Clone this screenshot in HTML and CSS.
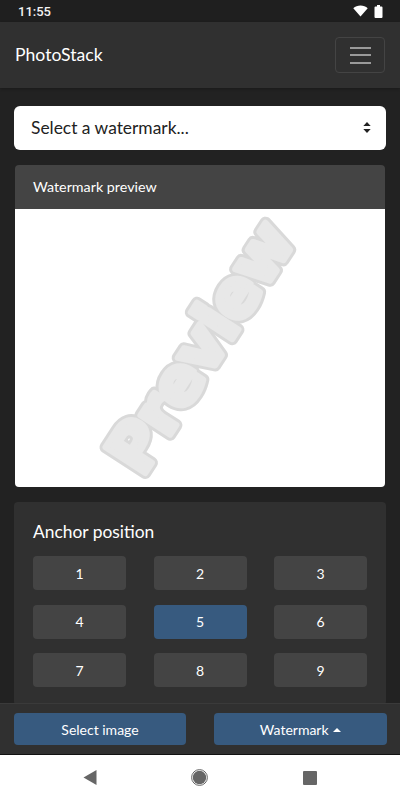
FILE: index.html
```html
<!DOCTYPE html>
<html lang="en">
<head>
    <meta charset="UTF-8">
    <meta name="viewport" content="width=device-width, initial-scale=1.0">
    <title>PhotoStack</title>
    <link rel="stylesheet" href="styles.css">
</head>
<body>
    <div class="status-bar">
        <span class="clock">11:55</span>
        <div class="status-icons">
            <svg width="15" height="12" viewBox="0 0 15 12"><path d="M7.5 11.5 0.3 3.2C2.2 1.500 4.700 0.500 7.500 0.500s5.300 1 7.200 2.700z" fill="#fff"/></svg>
            <svg width="9" height="13" viewBox="0 0 9 13"><path d="M3 0h3v1.500h1.500a1 1 0 0 1 1 1v9.500a1 1 0 0 1-1 1h-6a1 1 0 0 1-1-1v-9.500a1 1 0 0 1 1-1h1.500z" fill="#fff"/></svg>
        </div>
    </div>

    <nav class="navbar">
        <span class="brand">PhotoStack</span>
        <button class="toggler">
            <span></span><span></span><span></span>
        </button>
    </nav>

    <main class="content">
        <div class="select-box">
            <span>Select a watermark...</span>
            <svg width="8" height="11" viewBox="0 0 8 11"><path d="M4 0 7.700 4H.3zM4 11 .3 7h7.400z" fill="#222"/></svg>
        </div>

        <section class="preview-card">
            <div class="preview-head">Watermark preview</div>
            <div class="preview-body">
                <svg class="preview-mark" width="370" height="278" viewBox="0 0 370 278">
                    <defs>
                        <text id="markText" transform="translate(127 269) rotate(-57)">Preview</text>
                    </defs>
                    <use href="#markText" class="mark-edge"/>
                    <use href="#markText" class="mark-fill"/>
                </svg>
            </div>
        </section>

        <section class="anchor-card">
            <h2>Anchor position</h2>
            <div class="anchor-grid">
                <button class="anchor-btn">1</button>
                <button class="anchor-btn">2</button>
                <button class="anchor-btn">3</button>
                <button class="anchor-btn">4</button>
                <button class="anchor-btn active">5</button>
                <button class="anchor-btn">6</button>
                <button class="anchor-btn">7</button>
                <button class="anchor-btn">8</button>
                <button class="anchor-btn">9</button>
            </div>
        </section>
    </main>

    <div class="action-bar">
        <button class="action-btn">Select image</button>
        <button class="action-btn">Watermark <i class="caret"></i></button>
    </div>

    <div class="system-nav">
        <svg width="14" height="15" viewBox="0 0 14 15"><path d="M13.500 0v15L.5 7.500z" fill="#666"/></svg>
        <svg width="17" height="17" viewBox="0 0 17 17"><circle cx="8.500" cy="8.500" r="6.700" fill="#666"/><circle cx="8.500" cy="8.500" r="7.900" fill="none" stroke="#666" stroke-width="1"/></svg>
        <svg width="14" height="14" viewBox="0 0 14 14"><rect width="14" height="14" rx="1" fill="#666"/></svg>
    </div>
</body>
</html>
```

FILE: styles.css
```css
:root {
    --bg: #222;
    --panel: #303030;
    --grey: #444;
    --blue: #375a7f;
}

* {
    box-sizing: border-box;
    margin: 0;
    padding: 0;
    font-family: 'Lato', sans-serif;
}

body {
    width: 400px;
    height: 800px;
    overflow: hidden;
    display: flex;
    flex-direction: column;
    background: var(--bg);
    color: #fff;
}

button {
    border: none;
    color: #fff;
    font-size: 14px;
}

/* status bar */
.status-bar {
    height: 22px;
    flex: none;
    display: flex;
    justify-content: space-between;
    align-items: center;
    padding: 0 17px 0 18px;
    background: #1f1f1f;
}

.clock {
    font-family: 'Roboto', sans-serif;
    font-size: 13px;
    font-weight: 500;
    color: #f2f2f2;
}

.status-icons {
    display: flex;
    align-items: center;
    gap: 6px;
}

/* navbar */
.navbar {
    height: 66px;
    flex: none;
    display: flex;
    justify-content: space-between;
    align-items: center;
    padding: 0 15px;
    background: var(--panel);
    box-shadow: 0 1px 3px rgba(0,0,0,0.25);
}

.brand {
    font-size: 17.6px;
    line-height: 1;
}

.toggler {
    width: 50px;
    height: 36px;
    display: flex;
    flex-direction: column;
    justify-content: center;
    align-items: center;
    gap: 5.5px;
    background: none;
    border: 1px solid #444;
    border-radius: 4px;
}

.toggler span {
    width: 21px;
    height: 2px;
    background: #9a9a9a;
}

/* main */
.content {
    flex: 1;
    min-height: 0;
    overflow: hidden;
    padding: 18px 14px 0;
}

.select-box {
    height: 44px;
    display: flex;
    justify-content: space-between;
    align-items: center;
    padding: 0 15px 2px 17px;
    background: #fff;
    border-radius: 6px;
    color: #222;
    font-size: 17.4px;
}

.preview-card {
    margin: 15px 1px 0;
    border-radius: 4px;
    overflow: hidden;
}

.preview-head {
    height: 44px;
    display: flex;
    align-items: center;
    padding: 0 18px 2px;
    background: var(--grey);
    font-size: 14.3px;
}

.preview-body {
    height: 278px;
    background: #fff;
}

.preview-mark {
    display: block;
}

.preview-mark text {
    font-family: 'DejaVu Sans', sans-serif;
    font-weight: bold;
    font-size: 65px;
    letter-spacing: -1.5px;
    stroke-linejoin: round;
}

.mark-edge {
    fill: #d9d9d9;
    stroke: #d9d9d9;
    stroke-width: 12px;
}

.mark-fill {
    fill: #e8e8e8;
    stroke: #e8e8e8;
    stroke-width: 6px;
}

.anchor-card {
    margin-top: 15px;
    padding: 19px 19px 18px;
    background: var(--panel);
    border-radius: 4px;
}

.anchor-card h2 {
    font-size: 17.4px;
    font-weight: 400;
    line-height: 22px;
    margin-bottom: 13px;
}

.anchor-grid {
    display: grid;
    grid-template-columns: repeat(3, 93px);
    justify-content: space-between;
    row-gap: 14.5px;
}

.anchor-btn {
    height: 34px;
    background: var(--grey);
    border-radius: 4px;
}

.anchor-btn.active {
    background: var(--blue);
}

/* bottom bar */
.action-bar {
    height: 52px;
    flex: none;
    display: grid;
    grid-template-columns: 172px 173px;
    justify-content: space-between;
    padding: 9px 13px 9px 14px;
    background: var(--panel);
    border-top: 1px solid #3a3a3a;
    border-bottom: 1px solid #111;
}

.action-btn {
    background: var(--blue);
    border-radius: 4px;
}

.caret {
    display: inline-block;
    margin-left: 1px;
    vertical-align: 3px;
    border-left: 4.5px solid transparent;
    border-right: 4.5px solid transparent;
    border-bottom: 4.5px solid #fff;
}

/* android nav */
.system-nav {
    height: 45px;
    flex: none;
    display: grid;
    grid-template-columns: repeat(3, 110px);
    justify-content: center;
    justify-items: center;
    align-items: center;
    padding-right: 1px;
    background: #fff;
}
```
